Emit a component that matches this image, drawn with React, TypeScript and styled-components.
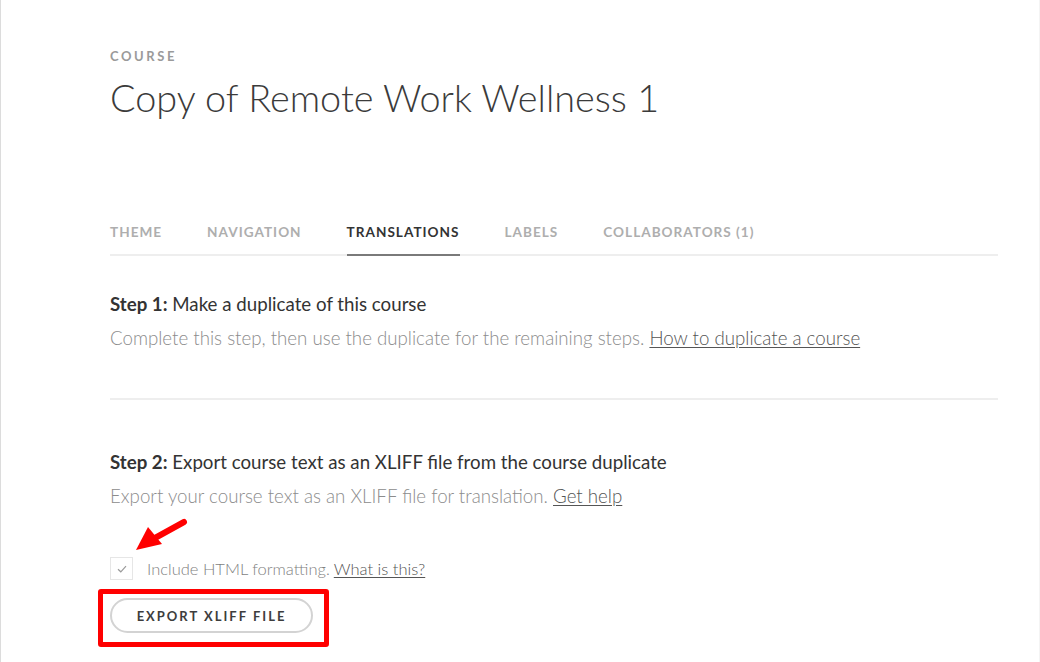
import styled, { createGlobalStyle } from 'styled-components';

const GlobalStyle = createGlobalStyle`
  html, body {
    margin: 0;
    padding: 0;
    background: #fff;
  }
  body {
    font-family: Lato, "Open Sans", sans-serif;
    color: #333;
  }
`;

const Page = styled.div`
  position: relative;
  min-height: 662px;
  box-sizing: border-box;
  border-left: 1px solid #dcdcdc;
  border-right: 1px solid #f4f4f4;
  padding: 48px 41px 0 109px;
  overflow: hidden;
`;

const Eyebrow = styled.div`
  font-size: 13px;
  line-height: 16px;
  font-weight: 700;
  letter-spacing: 2.6px;
  color: #9a9a9a;
  text-transform: uppercase;
`;

const Title = styled.h1`
  margin: 10px 0 0;
  font-size: 37.8px;
  line-height: 48px;
  font-weight: 300;
  color: #3b3b3b;
`;

const Tabs = styled.nav`
  display: flex;
  gap: 45px;
  margin-top: 102px;
  border-bottom: 2px solid #eeeeee;
`;

const Tab = styled.div<{ $active?: boolean }>`
  font-size: 13.6px;
  line-height: 16px;
  font-weight: 700;
  letter-spacing: 1px;
  text-transform: uppercase;
  padding-bottom: 14px;
  margin-bottom: -2px;
  color: ${p => (p.$active ? '#333' : '#aeaeae')};
  border-bottom: 2px solid ${p => (p.$active ? '#7a7a7a' : 'transparent')};
`;

const Step = styled.section<{ $last?: boolean }>`
  padding: ${p => (p.$last ? '51px 0 0' : '37px 0 49px')};
  border-bottom: ${p => (p.$last ? 'none' : '2px solid #eeeeee')};
`;

const StepTitle = styled.h2`
  margin: 0;
  font-size: 18.7px;
  line-height: 22px;
  font-weight: 400;
  color: #333;

  strong {
    font-weight: 700;
  }
`;

const StepText = styled.p`
  margin: 12px 0 0;
  font-size: 18.7px;
  line-height: 22px;
  font-weight: 300;
  color: #8c8c8c;

  a {
    color: #555;
    text-decoration: underline;
    text-underline-offset: 2px;
  }
`;

const CheckRow = styled.label`
  display: flex;
  align-items: center;
  gap: 14px;
  margin-top: 50px;
  font-size: 16.5px;
  font-weight: 300;
  color: #7f7f7f;

  a {
    color: #555;
    text-decoration: underline;
    text-underline-offset: 2px;
    margin-left: 4px;
  }
`;

const Box = styled.span`
  display: inline-flex;
  align-items: center;
  justify-content: center;
  width: 21px;
  height: 21px;
  border: 1px solid #e6e6e6;
  background: #fff;
`;

const ExportButton = styled.button`
  display: block;
  margin-top: 18px;
  width: 203px;
  height: 35px;
  border: 2px solid #d3d3d3;
  border-radius: 18px;
  background: #fff;
  font-family: Lato, "Open Sans", sans-serif;
  font-size: 13px;
  font-weight: 700;
  letter-spacing: 2px;
  color: #3d3d3d;
  text-transform: uppercase;
  cursor: pointer;
`;

const Highlight = styled.div`
  position: absolute;
  left: 97px;
  top: 589px;
  width: 231px;
  height: 58px;
  box-sizing: border-box;
  border: 5px solid #ff0000;
  border-radius: 3px;
  pointer-events: none;
`;

const Arrow = styled.svg`
  position: absolute;
  left: 130px;
  top: 514px;
  pointer-events: none;
`;

export default function App() {
  return (
    <>
      <GlobalStyle />
      <Page>
        <Eyebrow>Course</Eyebrow>
        <Title>Copy of Remote Work Wellness 1</Title>

        <Tabs>
          <Tab>Theme</Tab>
          <Tab>Navigation</Tab>
          <Tab $active>Translations</Tab>
          <Tab>Labels</Tab>
          <Tab>Collaborators (1)</Tab>
        </Tabs>

        <Step>
          <StepTitle>
            <strong>Step 1:</strong> Make a duplicate of this course
          </StepTitle>
          <StepText>
            Complete this step, then use the duplicate for the remaining steps. <a href="#">How to duplicate a course</a>
          </StepText>
        </Step>

        <Step $last>
          <StepTitle>
            <strong>Step 2:</strong> Export course text as an XLIFF file from the course duplicate
          </StepTitle>
          <StepText>
            Export your course text as an XLIFF file for translation. <a href="#">Get help</a>
          </StepText>
          <CheckRow>
            <Box>
              <svg width="10" height="8" viewBox="0 0 10 8">
                <path d="M1 4.2 L3.8 6.8 L9 1.2" fill="none" stroke="#9a9a9a" strokeWidth="1.2" />
              </svg>
            </Box>
            <span>
              Include HTML formatting.<a href="#">What is this?</a>
            </span>
          </CheckRow>
          <ExportButton>Export XLIFF file</ExportButton>
        </Step>

        <Highlight />
        <Arrow width="60" height="40" viewBox="0 0 60 40">
          <line x1="53" y1="8" x2="24" y2="24" stroke="#ff0000" strokeWidth="6" strokeLinecap="round" />
          <polygon points="5,36 17,13 31,30" fill="#ff0000" />
        </Arrow>
      </Page>
    </>
  );
}
